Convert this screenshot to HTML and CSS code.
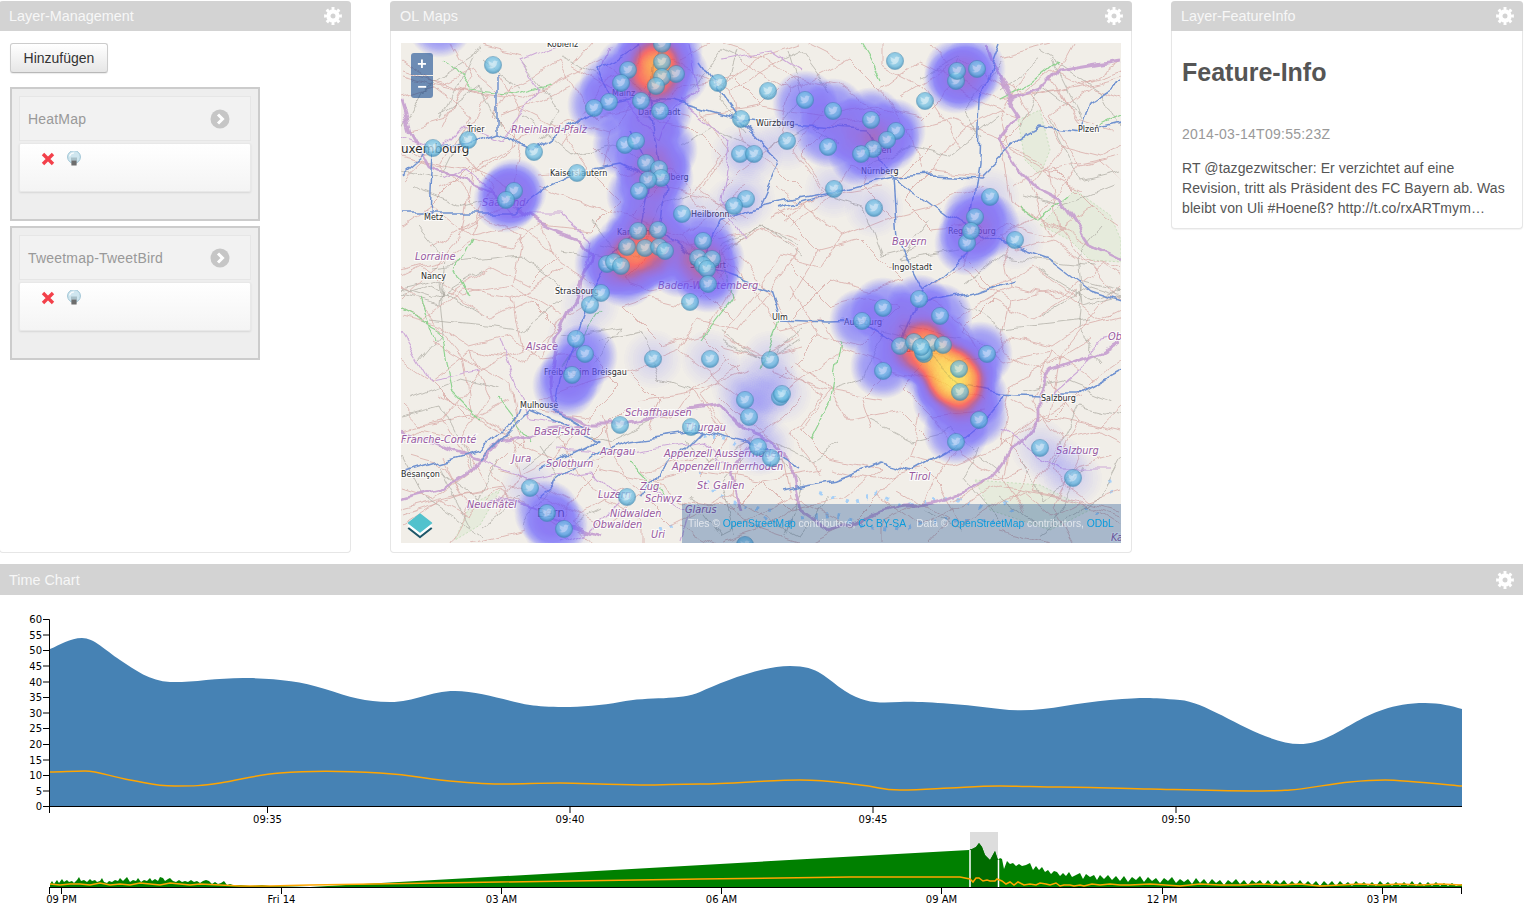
FILE: index.html
```html
<!DOCTYPE html>
<html lang="de">
<head>
<meta charset="utf-8">
<title>Dashboard</title>
<link rel="stylesheet" href="styles.css">
</head>
<body>
<svg class="defs" width="0" height="0" aria-hidden="true">
  <defs>
    <g id="gear">
      <circle class="gear-ring" cx="9" cy="9" r="4.6"/>
      <circle class="gear-teeth" cx="9" cy="9" r="7.2" pathLength="16"/>
    </g>
    <radialGradient id="pin" cx=".5" cy=".42" r=".55">
      <stop offset="0" stop-color="#9cd6ef"/>
      <stop offset=".7" stop-color="#6bbbe0"/>
      <stop offset="1" stop-color="#3a8fbb"/>
    </radialGradient>
    <radialGradient id="stamp">
      <stop offset="0" stop-color="#000" stop-opacity=".22"/>
      <stop offset=".6" stop-color="#000" stop-opacity=".14"/>
      <stop offset="1" stop-color="#000" stop-opacity="0"/>
    </radialGradient>
    <radialGradient id="stamp-faint">
      <stop offset="0" stop-color="#000" stop-opacity=".055"/>
      <stop offset="1" stop-color="#000" stop-opacity="0"/>
    </radialGradient>
    <g id="h"><circle r="33" fill="url(#stamp)"/></g>
    <g id="l"><circle r="30" fill="url(#stamp-faint)"/></g>
    <g id="m">
      <circle r="8.6" fill="url(#pin)" stroke="#3f86ad" stroke-opacity=".6"/>
      <path fill="#dff3fb" fill-opacity=".6" d="M5,-3.4c-.4.2-.8.3-1.2.3.4-.3.8-.7.9-1.2-.4.2-.9.4-1.3.5-.4-.4-.9-.7-1.5-.7-1.1 0-2 .9-2 2 0 .2 0 .3.1.5-1.7-.1-3.2-.9-4.2-2.2-.2.3-.3.6-.3 1 0 .7.4 1.3.9 1.7-.3 0-.6-.1-.9-.3 0 1 .7 1.8 1.6 2-.2 0-.3.1-.5.1h-.4c.3.8 1 1.4 1.9 1.4-.7.5-1.6.9-2.5.9h-.5c.9.6 2 .9 3.1.9 3.7 0 5.7-3.1 5.7-5.7v-.3c.4-.3.8-.7 1-1.1z"/>
    </g>
    <filter id="heat" x="0" y="0" width="100%" height="100%" color-interpolation-filters="sRGB">
      <feColorMatrix type="matrix" values="0 0 0 1 0  0 0 0 1 0  0 0 0 1 0  0 0 0 1 0"/>
      <feComponentTransfer>
        <feFuncR type="table" tableValues=".36 .36 .38 .4 .42 .46 .52 .66 .98 1 1"/>
        <feFuncG type="table" tableValues=".36 .36 .34 .32 .32 .3 .28 .26 .28 .6 1"/>
        <feFuncB type="table" tableValues="1 1 1 .98 .95 .9 .78 .55 .26 .18 .3"/>
        <feFuncA type="table" tableValues="0 .42 .66 .72 .74 .75 .76 .78 .78 .78 .78"/>
      </feComponentTransfer>
    </filter>
    <filter id="wobble" filterUnits="userSpaceOnUse" x="401" y="43" width="720" height="500">
      <feTurbulence type="fractalNoise" baseFrequency=".035" numOctaves="3" seed="7"/>
      <feDisplacementMap in="SourceGraphic" scale="13" xChannelSelector="R" yChannelSelector="G"/>
    </filter>
  </defs>
</svg>

<main class="page">
  <div class="top-row">
    <section class="panel panel-left">
      <header class="panel-head"><span>Layer-Management</span>
        <svg class="gear" viewBox="0 0 18 18"><use href="#gear"/></svg></header>
      <div class="panel-body layers">
        <button class="btn" type="button">Hinzufügen</button>
        <article class="layer">
          <div class="layer-head"><span>HeatMap</span>
            <svg class="chev" viewBox="0 0 20 20"><circle cx="10" cy="10" r="9.5"/><path d="M8 5.5 12.5 10 8 14.5"/></svg></div>
          <div class="layer-body">
            <svg class="ic-x" viewBox="0 0 14 14"><path d="M2 2 12 12M12 2 2 12"/></svg>
            <svg class="ic-bulb" viewBox="0 0 16 16"><circle class="glass" cx="8" cy="6" r="6.4"/><path class="shine" d="M3.6 5.4A4.6 4.6 0 0 1 8 2"/><rect class="lamp" x="5" y="6.5" width="6" height="3"/><rect class="base" x="5.4" y="9.5" width="5.2" height="5"/></svg>
          </div>
        </article>
        <article class="layer">
          <div class="layer-head"><span>Tweetmap-TweetBird</span>
            <svg class="chev" viewBox="0 0 20 20"><circle cx="10" cy="10" r="9.5"/><path d="M8 5.5 12.5 10 8 14.5"/></svg></div>
          <div class="layer-body">
            <svg class="ic-x" viewBox="0 0 14 14"><path d="M2 2 12 12M12 2 2 12"/></svg>
            <svg class="ic-bulb" viewBox="0 0 16 16"><circle class="glass" cx="8" cy="6" r="6.4"/><path class="shine" d="M3.6 5.4A4.6 4.6 0 0 1 8 2"/><rect class="lamp" x="5" y="6.5" width="6" height="3"/><rect class="base" x="5.4" y="9.5" width="5.2" height="5"/></svg>
          </div>
        </article>
      </div>
    </section>

    <section class="panel">
      <header class="panel-head"><span>OL Maps</span>
        <svg class="gear" viewBox="0 0 18 18"><use href="#gear"/></svg></header>
      <div class="panel-body map-body">
        <div class="map">
          <svg class="map-svg" viewBox="401 43 720 500" width="720" height="500">
            <rect class="land" x="401" y="43" width="720" height="500"/>
            <g class="forest">
              <path d="M1018 120 1040 110 1050 150 1040 175 1025 160ZM1040 225 1075 190 1110 215 1121 240 1121 262 1090 260 1070 240ZM975 480 1040 485 1090 510 1050 530 990 510Z"/>
              <path d="M470 505 500 490 480 525 455 540Z"/>
            </g>
            <g class="wobbly">
              <g class="lake">
                <path d="M820 495 850 505 880 495 905 505 925 500 955 495 980 510M790 520 830 515 870 525 905 530 950 520 1000 525M1005 500 1020 515M1085 505 1100 515M1108 480 1115 500M700 470 720 500 770 510 760 530M660 530 680 525M700 432 730 440 745 452"/>
              </g>
              <g id="roads-a">
                <g class="sec">
                  <path d="M401 60 440 85 470 70 500 95 530 80 560 60 580 100 600 120M450 43 470 80 445 120 410 130M497 73 520 110 510 150 470 175 440 190"/>
                  <path d="M520 110 560 130 590 170 620 200 590 230 540 225 510 250 470 240 440 260 401 270M590 170 540 175M540 225 560 265 600 290M445 290 490 320 530 300 560 330 520 360 470 350 430 380 401 360"/>
                  <path d="M430 380 470 420 510 400M470 350 490 400 460 440 420 430 401 440M460 440 490 490 440 500 401 510M540 400 590 380 630 370 680 350 700 320 740 330 770 290 800 250 760 230 720 240M630 370 660 400 650 430M680 350 720 380 745 400"/>
                  <path d="M740 60 790 90 850 60 880 90 920 60 1000 100 1060 90 1121 70M790 90 780 140 740 170 720 190M880 90 910 130 950 120 1000 140 1050 170 1100 160 1121 180M910 130 920 170M1000 140 1010 200 1060 230 1100 280 1121 300M1060 90 1080 130M1050 170 1060 230"/>
                  <path d="M780 210 820 250 860 240 900 280 870 290 830 280 790 320M820 250 790 300M960 270 1010 300 1060 290 1100 320 1121 310M1010 300 1000 350 1040 370 1090 340M1040 370 1080 420 1121 430M1000 440 1030 470 1010 500M1080 420 1050 470 1090 500 1121 490"/>
                  <path d="M790 360 830 390 850 420 900 410 930 440M830 390 800 430 830 460 880 470M700 470 760 480 790 510 840 500 880 470M640 400 700 390 750 370"/>
                  <path d="M680 60 720 40M700 110 730 150 700 190 740 220M560 440 600 500 640 520 640 543M500 470 530 480 570 500M600 470 650 480 690 470M720 500 760 530 800 543M900 490 950 520 930 543M1000 530 1050 543"/>
                </g>
                <g class="grey">
                  <path d="M401 290 440 280 445 330 420 360M470 60 440 120M520 60 560 110 540 140M410 400 460 380 500 390M440 470 480 500 500 460M430 320 520 330 560 300M735 50 720 100 745 130M1040 50 1100 90 1121 130M1050 120 1080 180 1121 170M930 220 900 260 960 250M1040 270 1090 300 1121 290M870 420 910 440 950 430 1000 470M720 330 760 360 800 340M600 340 640 330 660 380 690 390M770 440 810 460 840 440M560 530 600 510M1000 90 1040 60M780 60 800 50 830 90"/>
                </g>
              </g>
              <use href="#roads-a" transform="rotate(180 761 293)"/>
              <use href="#roads-a" transform="translate(1522 0) scale(-1 1)"/>
              <use href="#roads-a" transform="translate(0 586) scale(1 -1)"/>
              <g class="green">
                <path d="M446 60 470 90 515 95 550 85M470 240 455 270 470 300M401 310 440 330 450 390 480 420M435 340 420 300M720 250 730 300 700 340M780 320 760 370M880 80 870 60 860 43M1000 100 1030 85 1060 60M1070 195 1040 220 1020 205M500 400 530 440M600 310 560 370M840 340 830 400 810 440M630 460 670 500M1121 115 1100 125"/>
              </g>
              <g class="state">
                <path d="M401 135 440 150 465 125 500 140 540 90 520 60 560 43M610 43 600 80 625 100 660 140 670 110 700 90 690 43M680 100 730 140 720 200 745 240M580 300 590 240 560 215 510 215 490 190 465 170 445 180M400 330 430 380 480 370M500 340 530 420 570 425M480 460 530 480 590 470 620 500 590 530 560 543M650 490 690 510 680 543M560 450 620 455 700 440 730 470"/>
                <path d="M1045 400 1080 370 1100 340 1121 335M1000 430 1060 470 1110 470M720 60 770 50 800 70"/>
              </g>
              <g class="border">
                <path d="M401 100 410 130 430 165 460 180 490 192 540 225 580 240 592 255 575 300 555 340 550 385 556 410 590 425 620 425 650 420 690 410 720 405 745 430 770 440 790 462 800 510 830 530 860 520 880 510 900 505 940 500 990 480 1010 450 1025 440 1040 420 1040 390 1050 370 1100 352 1121 340"/>
                <path d="M1121 60 1060 70 1040 90 1010 100 990 60 985 43M1010 100 1020 115 1000 140 1020 170 1040 190 1060 200 1090 245 1121 260"/>
                <path d="M401 430 450 450 485 460 500 440 550 430 590 425M401 500 440 490 470 470 500 440"/>
                <path d="M740 510 730 470 750 445M600 535 560 520 510 500 470 510"/>
              </g>
              <g class="motor">
                <path d="M401 175 430 150 470 143 497 133 533 150 583 117 610 105 633 100 670 100 740 119 790 125 867 130 893 177M497 133 497 73M433 150 430 215M401 213 433 213 513 213 546 187 577 173 620 165 650 180"/>
                <path d="M633 130 650 180 640 230 610 260 590 298 575 340 560 380 555 410 590 430M660 43 650 100 655 140 665 190 660 230 700 265 770 290 780 320 830 322 862 321 900 346 925 352 960 385 1000 393 1040 395 1075 395 1121 370"/>
                <path d="M700 265 720 220 760 205 840 190 893 177 930 175 980 177 1013 143 1040 128 1080 133 1120 123M980 97 978 163 973 197 967 253 940 277 923 290 900 346M893 177 947 217 993 240 1050 260 1090 290 1121 300M893 177 897 237 923 290M923 303 980 292 1013 280"/>
                <path d="M780 490 836 480 880 463 913 472 947 453 980 427 1005 395M780 208 840 190M401 473 480 450 515 420 520 408M540 495 590 455 630 440 700 430 760 445 800 470M540 470 600 440 530 410 480 460M610 100 600 70 640 43M700 60 740 119 780 160 760 205M980 97 1000 43M640 500 660 470 700 430M1080 133 1090 100 1121 80"/>
              </g>
            </g>
            <g class="lbl">
              <text x="547" y="47">Koblenz</text><text x="467" y="132">Trier</text><text x="612" y="96">Mainz</text>
              <text x="638" y="115">Darmstadt</text><text x="756" y="126">Würzburg</text><text x="1078" y="132">Plzeň</text>
              <text x="550" y="176">Kaiserslautern</text><text x="645" y="180">Heidelberg</text><text x="861" y="174">Nürnberg</text>
              <text x="856" y="153">Erlangen</text><text x="424" y="220">Metz</text><text x="691" y="217">Heilbronn</text>
              <text x="617" y="235">Karlsruhe</text><text x="948" y="234">Regensburg</text><text x="421" y="279">Nancy</text>
              <text x="892" y="270">Ingolstadt</text><text x="690" y="268">Stuttgart</text><text x="555" y="294">Strasbourg</text>
              <text x="772" y="320">Ulm</text><text x="844" y="325">Augsburg</text><text x="899" y="352">München</text>
              <text x="544" y="375">Freiburg im Breisgau</text><text x="520" y="408">Mulhouse</text><text x="1041" y="401">Salzburg</text>
              <text x="401" y="477">Besançon</text>
              <text class="big" x="401" y="153">uxembourg</text><text class="big" x="537" y="517">Bern</text>
            </g>
            <g class="reg">
              <text x="511" y="133">Rheinland-Pfalz</text><text x="482" y="206">Saarland</text><text x="892" y="245">Bayern</text>
              <text x="415" y="260">Lorraine</text><text x="658" y="289">Baden-Württemberg</text><text x="526" y="350">Alsace</text>
              <text x="1108" y="340">Ob</text><text x="625" y="416">Schaffhausen</text><text x="534" y="435">Basel-Stadt</text>
              <text x="685" y="431">Thurgau</text><text x="401" y="443">Franche-Comté</text><text x="600" y="455">Aargau</text>
              <text x="664" y="457">Appenzell Ausserrhoden</text><text x="672" y="470">Appenzell Innerrhoden</text><text x="512" y="462">Jura</text>
              <text x="546" y="467">Solothurn</text><text x="909" y="480">Tirol</text><text x="1056" y="454">Salzburg</text>
              <text x="640" y="490">Zug</text><text x="697" y="489">St. Gallen</text><text x="598" y="498">Luzern</text>
              <text x="645" y="502">Schwyz</text><text x="467" y="508">Neuchâtel</text><text x="685" y="513">Glarus</text>
              <text x="610" y="517">Nidwalden</text><text x="593" y="528">Obwalden</text><text x="651" y="538">Uri</text>
              <text x="1111" y="541">Ka</text>
            </g>
            <g class="heat">
              <use href="#h" x="440" y="25"/>
              <use href="#h" x="628" y="70"/><use href="#h" x="612" y="86"/><use href="#h" x="600" y="105"/><use href="#h" x="645" y="60"/>
              <use href="#h" x="662" y="62"/><use href="#h" x="676" y="74"/><use href="#h" x="662" y="77"/><use href="#h" x="656" y="86"/>
              <use href="#h" x="641" y="101"/><use href="#h" x="660" y="111"/><use href="#h" x="660" y="70"/><use href="#h" x="650" y="45"/><use href="#h" x="670" y="50"/><use href="#h" x="660" y="40"/><use href="#h" x="658" y="68"/><use href="#h" x="650" y="72"/><use href="#h" x="655" y="80"/><use href="#h" x="648" y="66"/>
              <use href="#h" x="625" y="145"/><use href="#h" x="650" y="130"/><use href="#h" x="646" y="163"/><use href="#h" x="659" y="169"/><use href="#h" x="661" y="178"/>
              <use href="#h" x="648" y="180"/><use href="#h" x="639" y="195"/><use href="#h" x="653" y="212"/><use href="#h" x="665" y="150"/>
              <use href="#h" x="658" y="230"/><use href="#h" x="638" y="231"/><use href="#h" x="627" y="247"/><use href="#h" x="645" y="248"/><use href="#h" x="659" y="247"/><use href="#h" x="665" y="251"/><use href="#h" x="645" y="262"/><use href="#h" x="640" y="240"/><use href="#h" x="640" y="258"/><use href="#h" x="635" y="264"/>
              <use href="#h" x="607" y="264"/><use href="#h" x="614" y="262"/><use href="#h" x="621" y="266"/><use href="#h" x="625" y="275"/>
              <use href="#h" x="703" y="241"/><use href="#h" x="698" y="258"/><use href="#h" x="712" y="259"/><use href="#h" x="703" y="265"/><use href="#h" x="707" y="269"/><use href="#h" x="708" y="280"/><use href="#h" x="680" y="265"/>
              <use href="#h" x="514" y="191"/><use href="#h" x="506" y="200"/><use href="#h" x="510" y="196"/>
              <use href="#h" x="805" y="103"/><use href="#h" x="833" y="111"/><use href="#h" x="871" y="120"/><use href="#h" x="893" y="131"/><use href="#h" x="887" y="140"/><use href="#h" x="873" y="149"/><use href="#h" x="861" y="154"/><use href="#h" x="828" y="135"/><use href="#h" x="855" y="130"/>
              <use href="#h" x="957" y="71"/><use href="#h" x="973" y="69"/><use href="#h" x="956" y="81"/><use href="#h" x="965" y="78"/>
              <use href="#h" x="975" y="217"/><use href="#h" x="971" y="231"/><use href="#h" x="967" y="243"/><use href="#h" x="987" y="225"/>
              <use href="#h" x="862" y="321"/><use href="#h" x="883" y="310"/><use href="#h" x="919" y="307"/><use href="#h" x="940" y="316"/><use href="#h" x="980" y="354"/><use href="#h" x="883" y="366"/>
              <use href="#h" x="900" y="346"/><use href="#h" x="914" y="342"/><use href="#h" x="921" y="347"/><use href="#h" x="931" y="343"/><use href="#h" x="943" y="345"/><use href="#h" x="924" y="354"/><use href="#h" x="923" y="352"/><use href="#h" x="959" y="369"/><use href="#h" x="960" y="392"/><use href="#h" x="950" y="375"/><use href="#h" x="958" y="380"/><use href="#h" x="955" y="385"/><use href="#h" x="940" y="362"/><use href="#h" x="950" y="368"/><use href="#h" x="945" y="380"/><use href="#h" x="965" y="378"/>
              <use href="#h" x="950" y="375"/><use href="#h" x="955" y="378"/><use href="#h" x="945" y="370"/><use href="#h" x="960" y="384"/><use href="#h" x="935" y="358"/><use href="#h" x="925" y="348"/><use href="#h" x="915" y="350"/><use href="#h" x="970" y="370"/><use href="#h" x="950" y="392"/><use href="#h" x="935" y="375"/><use href="#h" x="945" y="400"/><use href="#h" x="965" y="400"/>
              <use href="#h" x="976" y="415"/><use href="#h" x="956" y="432"/><use href="#h" x="975" y="395"/><use href="#h" x="910" y="325"/>
              <use href="#h" x="585" y="356"/><use href="#h" x="572" y="375"/><use href="#h" x="565" y="385"/>
              <use href="#h" x="547" y="513"/><use href="#h" x="555" y="525"/>
              <use href="#l" x="745" y="400"/><use href="#l" x="749" y="417"/><use href="#l" x="782" y="394"/><use href="#l" x="770" y="385"/><use href="#l" x="760" y="405"/><use href="#l" x="740" y="385"/><use href="#l" x="765" y="445"/><use href="#l" x="758" y="447"/>
              <use href="#l" x="653" y="359"/><use href="#l" x="710" y="359"/><use href="#l" x="770" y="360"/><use href="#l" x="530" y="488"/><use href="#l" x="564" y="529"/>
              <use href="#l" x="740" y="154"/><use href="#l" x="754" y="154"/><use href="#l" x="746" y="199"/><use href="#l" x="734" y="206"/><use href="#l" x="787" y="141"/><use href="#l" x="834" y="189"/><use href="#l" x="874" y="208"/><use href="#l" x="1015" y="240"/><use href="#l" x="990" y="197"/>
              <use href="#l" x="1040" y="448"/><use href="#l" x="1073" y="478"/><use href="#l" x="1058" y="465"/><use href="#l" x="691" y="214"/><use href="#l" x="590" y="305"/><use href="#l" x="576" y="339"/>
            </g>
            <g class="pins">
              <use href="#m" x="493" y="65"/><use href="#m" x="628" y="70"/><use href="#m" x="662" y="62"/><use href="#m" x="676" y="74"/><use href="#m" x="662" y="77"/><use href="#m" x="656" y="86"/><use href="#m" x="621" y="83"/><use href="#m" x="718" y="83"/><use href="#m" x="768" y="91"/><use href="#m" x="609" y="102"/><use href="#m" x="594" y="108"/><use href="#m" x="641" y="101"/><use href="#m" x="660" y="111"/><use href="#m" x="741" y="119"/><use href="#m" x="468" y="140"/><use href="#m" x="433" y="148"/><use href="#m" x="534" y="152"/><use href="#m" x="625" y="145"/><use href="#m" x="636" y="141"/><use href="#m" x="646" y="163"/><use href="#m" x="659" y="169"/><use href="#m" x="661" y="178"/><use href="#m" x="648" y="180"/><use href="#m" x="639" y="191"/><use href="#m" x="577" y="173"/><use href="#m" x="740" y="154"/><use href="#m" x="754" y="154"/><use href="#m" x="787" y="141"/><use href="#m" x="514" y="191"/><use href="#m" x="506" y="200"/><use href="#m" x="746" y="199"/><use href="#m" x="734" y="206"/><use href="#m" x="682" y="214"/><use href="#m" x="658" y="230"/><use href="#m" x="638" y="231"/><use href="#m" x="627" y="247"/><use href="#m" x="645" y="248"/><use href="#m" x="659" y="247"/><use href="#m" x="665" y="251"/><use href="#m" x="703" y="241"/><use href="#m" x="607" y="264"/><use href="#m" x="614" y="262"/><use href="#m" x="621" y="266"/><use href="#m" x="698" y="258"/><use href="#m" x="712" y="259"/><use href="#m" x="703" y="265"/><use href="#m" x="707" y="269"/><use href="#m" x="708" y="284"/><use href="#m" x="601" y="293"/><use href="#m" x="590" y="305"/><use href="#m" x="690" y="302"/>
              <use href="#m" x="576" y="339"/><use href="#m" x="585" y="354"/><use href="#m" x="572" y="375"/><use href="#m" x="653" y="359"/><use href="#m" x="710" y="359"/><use href="#m" x="770" y="360"/><use href="#m" x="745" y="400"/><use href="#m" x="749" y="417"/><use href="#m" x="780" y="397"/><use href="#m" x="782" y="394"/><use href="#m" x="620" y="425"/><use href="#m" x="691" y="427"/><use href="#m" x="758" y="447"/><use href="#m" x="771" y="458"/><use href="#m" x="530" y="488"/><use href="#m" x="627" y="497"/><use href="#m" x="547" y="513"/><use href="#m" x="564" y="529"/><use href="#m" x="745" y="545"/>
              <use href="#m" x="862" y="321"/><use href="#m" x="883" y="308"/><use href="#m" x="919" y="299"/><use href="#m" x="940" y="316"/><use href="#m" x="987" y="354"/><use href="#m" x="883" y="371"/><use href="#m" x="900" y="346"/><use href="#m" x="914" y="342"/><use href="#m" x="931" y="343"/><use href="#m" x="943" y="345"/><use href="#m" x="924" y="354"/><use href="#m" x="923" y="352"/><use href="#m" x="921" y="347"/><use href="#m" x="959" y="369"/><use href="#m" x="960" y="392"/><use href="#m" x="979" y="420"/><use href="#m" x="956" y="442"/><use href="#m" x="1040" y="448"/><use href="#m" x="1073" y="478"/>
              <use href="#m" x="895" y="61"/><use href="#m" x="956" y="81"/><use href="#m" x="957" y="71"/><use href="#m" x="977" y="69"/><use href="#m" x="925" y="101"/><use href="#m" x="805" y="100"/><use href="#m" x="833" y="111"/><use href="#m" x="871" y="120"/><use href="#m" x="896" y="131"/><use href="#m" x="887" y="140"/><use href="#m" x="873" y="149"/><use href="#m" x="861" y="154"/><use href="#m" x="828" y="147"/><use href="#m" x="834" y="189"/><use href="#m" x="874" y="208"/><use href="#m" x="990" y="197"/><use href="#m" x="975" y="217"/><use href="#m" x="967" y="243"/><use href="#m" x="971" y="231"/><use href="#m" x="1015" y="240"/><use href="#m" x="662" y="44"/>
            </g>
          </svg>
          <div class="zoom"><button type="button">+</button><button type="button">−</button></div>
          <svg class="switcher" viewBox="0 0 26 26"><path class="sw-dark" d="M13 6.500 24.500 15.500 13 24.500 1.500 15.500Z"/><path class="sw-white" d="M13 4 24.500 13 13 22 1.500 13Z"/><path class="sw-top" d="M13 1 24.500 10 13 19 1.500 10Z"/></svg>
          <div class="attrib"><span>Tiles © <a>OpenStreetMap</a> contributors, <a>CC BY-SA</a></span><span>Data © <a>OpenStreetMap</a> contributors, <a>ODbL</a></span></div>
        </div>
      </div>
    </section>

    <section class="panel panel-auto">
      <header class="panel-head"><span>Layer-FeatureInfo</span>
        <svg class="gear" viewBox="0 0 18 18"><use href="#gear"/></svg></header>
      <div class="panel-body info">
        <h1>Feature-Info</h1>
        <p class="date">2014-03-14T09:55:23Z</p>
        <p class="tweet">RT @tazgezwitscher: Er verzichtet auf eine Revision, tritt als Präsident des FC Bayern ab. Was bleibt von Uli #Hoeneß? http://t.co/rxARTmym…</p>
      </div>
    </section>
  </div>

  <section class="panel panel-chart">
    <header class="panel-head head-chart"><span>Time Chart</span>
      <svg class="gear" viewBox="0 0 18 18"><use href="#gear"/></svg></header>
    <svg class="chart" viewBox="0 595 1523 326" width="1523" height="326">
      <path class="area" d="M50 649C60 645 70 638 82 638S105 650 120 660 150 681 170 682 220 677 250 678 300 681 325 689 365 702 390 702 430 691 455 691 510 702 530 705 590 708 620 702 680 701 700 692 760 666 790 666 825 678 845 691 880 703 900 702 960 704 1000 709 1070 703 1110 700 1150 698 1180 700 1260 744 1300 744 1360 703 1425 703C1440 703 1452 706 1462 709V806.500H50Z"/>
      <path class="line" d="M50 772C62 772 72 771 85 771S112 777 130 780 155 786 175 786 200 786 220 783 255 775 280 773 345 771 380 773 420 778 440 780 480 784 500 784 540 783 560 783 610 785 640 785 670 784 700 784 770 780 800 780 840 783 860 785 880 790 900 790 930 789 950 788 980 786 1000 786 1040 787 1060 787 1110 788 1150 789 1220 791 1250 791 1275 791 1290 790 1330 784 1350 782 1370 780 1385 780 1440 784 1462 786"/>
      <g class="axis">
        <path d="M43 619.500H49.500V806.500H1462M43 635H50M43 650.500H50M43 666H50M43 682H50M43 697.500H50M43 713H50M43 728.500H50M43 744.500H50M43 760H50M43 775.500H50M43 791H50M43 806.500H50M49.500 806V813M267.500 806V813M570 806V813M873 806V813M1176 806V813"/>
        <path d="M49.500 887V894M49.500 887.500H1462M61.500 887V894M281.500 887V894M501.500 887V894M721.500 887V894M941.500 887V894M1162.500 887V894M1382.500 887V894M1461.500 887V894"/>
      </g>
      <g class="ylab">
        <text x="42" y="623">60</text><text x="42" y="639">55</text><text x="42" y="654">50</text><text x="42" y="670">45</text><text x="42" y="686">40</text><text x="42" y="701">35</text><text x="42" y="717">30</text><text x="42" y="732">25</text><text x="42" y="748">20</text><text x="42" y="764">15</text><text x="42" y="779">10</text><text x="42" y="795">5</text><text x="42" y="810">0</text>
      </g>
      <g class="xlab">
        <text x="267.500" y="823">09:35</text><text x="570" y="823">09:40</text><text x="873" y="823">09:45</text><text x="1176" y="823">09:50</text>
        <text x="61.500" y="903">09 PM</text><text x="281.500" y="903">Fri 14</text><text x="501.500" y="903">03 AM</text><text x="721.500" y="903">06 AM</text><text x="941.500" y="903">09 AM</text><text x="1162" y="903">12 PM</text><text x="1382" y="903">03 PM</text>
      </g>
      <rect class="brush" x="970" y="832" width="28" height="55"/>
      <path class="mini" d="M50 887V884L52 881 54 884 57 880 59 883 62 879 64 882 67 880 69 882 72 881 74 883 77 880 79 877 81 881 84 880 87 882 90 879 92 881 95 880 97 882 100 881 102 878 104 882 107 883 109 881 112 882 115 880 118 881 120 878 123 881 125 879 127 877 130 882 133 880 136 881 138 878 141 882 144 880 147 881 150 878 152 881 155 879 158 881 160 877 163 878 165 881 168 879 170 878 173 881 176 882 179 880 182 882 185 881 188 882 191 880 194 882 197 881 200 883 203 881 206 880 209 881 212 884 215 882 218 884 221 883 224 881 227 885 230 884 233 885 237 885 241 885 250 886 262 885 270 886 310 887 969 850 972 849 976 847 979 843 982 847 985 855 990 860 995 851 998 860 1000 858 1002 859 1004 869 1007 861 1010 864 1013 863 1016 866 1019 864 1022 866 1026 865 1030 863 1033 870 1036 866 1039 870 1042 867 1045 872 1048 870 1051 874 1054 871 1057 872 1060 876 1063 873 1066 876 1069 872 1072 877 1076 875 1080 873 1083 879 1086 874 1090 877 1094 875 1097 880 1100 875 1104 879 1108 875 1112 880 1116 876 1120 881 1124 876 1128 882 1132 877 1136 880 1140 876 1144 882 1148 877 1152 881 1156 878 1160 883 1164 878 1168 881 1172 877 1176 883 1180 879 1184 882 1188 879 1192 884 1196 878 1200 883 1204 879 1208 884 1212 879 1216 883 1220 880 1224 885 1228 880 1232 883 1236 879 1240 884 1244 880 1248 885 1252 880 1256 883 1260 880 1264 885 1268 880 1272 885 1276 880 1280 884 1284 880 1288 885 1292 881 1296 885 1300 880 1304 885 1308 881 1312 885 1316 881 1320 886 1324 881 1328 885 1332 881 1336 886 1340 881 1344 885 1348 882 1352 886 1356 881 1360 885 1364 882 1368 886 1372 882 1376 886 1380 881 1384 885 1388 882 1392 886 1396 882 1400 886 1404 882 1408 886 1412 881 1416 886 1420 882 1424 886 1428 882 1432 886 1436 882 1440 886 1444 883 1448 886 1452 883 1456 886 1462 884V887Z"/>
      <path class="mini-dark" d="M970 887V849.500L972 849 976 847 979 843 982 847 985 855 990 860 995 851 998 860V887Z"/>
      <path class="cut" d="M970 850V887M998.500 860V887"/>
      <path class="mini-line" d="M50 884 60 885 70 884 80 884 90 885 100 883 110 885 120 884 130 885 140 883 150 884 160 885 170 883 180 884 190 885 200 884 220 885 240 886 270 886 310 885 500 882 700 879 850 877 960 877 970 879 973 882 976 878 979 878 983 881 987 880 990 881 995 881 997 879 1002 881 1006 884 1010 882 1014 885 1018 882 1024 885 1030 884 1036 885 1040 883 1046 884 1050 885 1056 883 1060 886 1064 885 1070 885 1074 886 1080 885 1084 886 1088 885 1092 884 1100 885 1110 884 1120 885 1130 885 1150 884 1165 885 1180 886 1200 884 1220 885 1240 885 1260 884 1280 885 1300 884 1320 886 1340 885 1360 884 1380 885 1400 884 1420 885 1440 884 1462 885"/>
    </svg>
  </section>
</main>
</body>
</html>
```
FILE: styles.css
```css
html, body { margin: 0; padding: 0; background: #fff; }
body { font-family: "Liberation Sans", Arial, sans-serif; font-size: 14px; line-height: 20px; color: #555; height: 921px; overflow: hidden; }
.defs { position: absolute; }
.page { width: 1523px; padding-top: 1px; }
.top-row { display: grid; grid-template-columns: 351px 742px 352px; column-gap: 39px; height: 552px; }
.panel { background: #fff; border: 1px solid #e6e6e6; border-top: 0; border-radius: 4px; display: flex; flex-direction: column; box-sizing: border-box; }
.panel-left { margin-left: -1px; }
.panel-auto { align-self: start; box-shadow: 0 1px 1px rgba(0,0,0,.05); }
.panel-head { height: 30px; margin: 0 -1px; background: #d3d3d3; color: #f7f7f7; font-size: 14.400px; display: flex; align-items: center; justify-content: space-between; padding: 0 9px 0 10px; border-radius: 4px 4px 0 0; flex: none; }
.head-chart { height: 31px; border-radius: 0; padding-left: 9px; }
.gear { width: 18px; height: 18px; }
.gear-ring { fill: none; stroke: #fff; stroke-width: 4.200; }
.gear-teeth { fill: none; stroke: #fff; stroke-width: 3.400; stroke-dasharray: 1 1; stroke-dashoffset: .5; }

.layers { padding: 12px 10px; }
.btn { display: block; width: 98px; height: 30px; padding: 0; font: 14px "Liberation Sans", Arial, sans-serif; color: #333; border: 1px solid #ccc; border-bottom-color: #b8b8b8; border-radius: 3px; background: linear-gradient(#fff, #e6e6e6); box-shadow: 0 1px 1px rgba(0,0,0,.08); margin-bottom: 14px; }
.layer { box-sizing: border-box; width: 250px; height: 134px; border: 2px solid #ccc; background: #eee; padding: 7px 7px 0; margin-bottom: 5px; }
.layer-head { height: 45px; box-sizing: border-box; border: 1px solid #e6e6e6; background: #f2f2f2; padding: 0 20px 0 8px; color: #999; letter-spacing: .2px; display: flex; align-items: center; justify-content: space-between; }
.chev { width: 20px; height: 20px; }
.chev circle { fill: #c6c6c6; }
.chev path { fill: none; stroke: #fff; stroke-width: 3; }
.layer-body { height: 49px; margin-top: 2px; box-sizing: border-box; border: 1px solid #e8e8e8; border-radius: 2px; background: linear-gradient(#fff, #f4f4f4); box-shadow: 0 1px 2px rgba(0,0,0,.1); padding: 7px 0 0 21px; display: flex; align-items: flex-start; gap: 11px; }
.ic-x { width: 14px; height: 14px; margin-top: 1px; }
.ic-x path { stroke: #f3404a; stroke-width: 3.400; fill: none; }
.ic-bulb { width: 16px; height: 16px; }
.glass { fill: #cfe6ef; stroke: #9cc3d4; }
.shine { fill: none; stroke: #fff; stroke-width: 1.200; }
.lamp { fill: #a9c0c8; }
.base { fill: #6d6d6d; }

.map-body { padding: 12px 10px 9px; }
.map { position: relative; width: 720px; height: 500px; overflow: hidden; }
.map-svg { display: block; }
.land { fill: #f1eee8; }
.forest path { fill: #e6ebdc; stroke: #c9dfbe; stroke-dasharray: 2 2; }
.wobbly { filter: url(#wobble); }
.lake path { fill: none; stroke: #a7d0f7; stroke-width: 4; stroke-dasharray: 3 9; }
.map-svg g path { stroke-linejoin: round; }
.sec path { fill: none; stroke: #d9aca8; stroke-width: .8; }
.grey path { fill: none; stroke: #aaa89f; stroke-width: .7; }
.green path { fill: none; stroke: #8fd390; stroke-width: 1.200; }
.state path { fill: none; stroke: #cda8d8; stroke-width: 1.100; }
.border path { fill: none; stroke: #c59fcf; stroke-width: 2.800; opacity: .9; }
.motor path { fill: none; stroke: #7092d0; stroke-width: 1.500; }
.lbl text { font: 8px "DejaVu Sans", sans-serif; fill: #2b2b2b; stroke: rgba(255,255,255,.8); stroke-width: 2.200; paint-order: stroke; }
.lbl .big { font-size: 12px; }
.reg text { font: italic 9.800px "DejaVu Sans", sans-serif; fill: #97599f; stroke: rgba(255,255,255,.8); stroke-width: 2.200; paint-order: stroke; }
.heat { filter: url(#heat); }
.pins use { opacity: .76; }
.zoom { position: absolute; left: 10px; top: 10px; width: 22px; display: flex; flex-direction: column; gap: 1px; }
.zoom button { width: 22px; height: 22px; padding: 0; border: 0; background: rgba(0,60,136,.55); color: #fff; font: bold 16px/20px "Liberation Sans", Arial, sans-serif; }
.zoom button:first-child { border-radius: 3px 3px 0 0; }
.zoom button:last-child { border-radius: 0 0 3px 3px; }
.switcher { position: absolute; left: 6px; top: 470px; width: 26px; height: 26px; }
.switcher path { stroke-width: 1.500; stroke-linejoin: round; }
.sw-dark { fill: #1d5668; stroke: #1d5668; }
.sw-white { fill: #fff; stroke: #fff; }
.sw-top { fill: #52c2cd; stroke: #52c2cd; }
.attrib { position: absolute; right: 0; bottom: 0; width: 439px; height: 39px; box-sizing: border-box; background: rgba(0,60,136,.3); color: rgba(255,255,255,.65); font-size: 10.330px; line-height: 12px; display: flex; gap: 10px; padding: 14px 7px 0 6px; white-space: nowrap; }
.attrib a { color: #0a9bdc; }

.info { padding: 0 10px; }
.info h1 { font-size: 25px; line-height: 30px; margin: 26px 0 0; color: #555; font-weight: bold; }
.info .date { margin: 37px 0 0; color: #999; letter-spacing: .25px; }
.info .tweet { margin: 14px 0 10px; letter-spacing: .1px; }

.panel-chart { margin-top: 11px; height: 357px; border: 0; border-radius: 0; }
.panel-chart .panel-head { margin: 0; }
.chart { display: block; }
.area { fill: #4682b4; }
.line { fill: none; stroke: #ffa500; stroke-width: 1.500; }
.axis path { fill: none; stroke: #000; stroke-width: 1; }
.ylab text { font: 10px "DejaVu Sans", sans-serif; text-anchor: end; fill: #000; }
.xlab text { font: 10px "DejaVu Sans", sans-serif; text-anchor: middle; fill: #000; }
.brush { fill: #ddd; }
.mini { fill: #008000; }
.mini-dark { fill: #006b00; }
.cut { stroke: #fff; stroke-width: 1.500; fill: none; }
.mini-line { fill: none; stroke: #ffa500; stroke-width: 1.500; }
```
